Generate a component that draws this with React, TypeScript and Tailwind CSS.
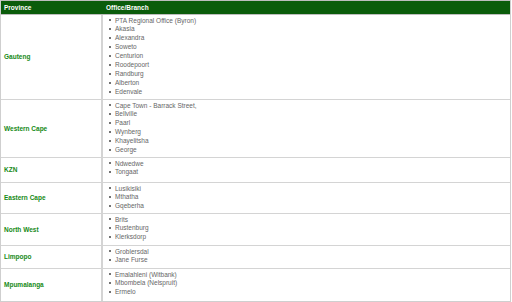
import React from "react";

type Row = { province: string; h: string; items: string[] };

const rows: Row[] = [
  {
    province: "Gauteng",
    h: "h-[84px]",
    items: [
      "PTA Regional Office (Byron)",
      "Akasia",
      "Alexandra",
      "Soweto",
      "Centurion",
      "Roodepoort",
      "Randburg",
      "Alberton",
      "Edenvale",
    ],
  },
  {
    province: "Western Cape",
    h: "h-[58px]",
    items: ["Cape Town - Barrack Street,", "Bellville", "Paarl", "Wynberg", "Khayelitsha", "George"],
  },
  { province: "KZN", h: "h-[25px]", items: ["Ndwedwe", "Tongaat"] },
  { province: "Eastern Cape", h: "h-[31px]", items: ["Lusikisiki", "Mthatha", "Gqeberha"] },
  { province: "North West", h: "h-[32px]", items: ["Brits", "Rustenburg", "Klerksdorp"] },
  { province: "Limpopo", h: "h-[23px]", items: ["Groblersdal", "Jane Furse"] },
  {
    province: "Mpumalanga",
    h: "h-[33px]",
    items: ["Emalahleni (Witbank)", "Mbombela (Nelspruit)", "Ermelo"],
  },
];

export default function App() {
  return (
    <div className="w-[512px] h-[302px] bg-white font-['Liberation_Sans',Arial,sans-serif] text-[6.5px]">
      <div className="w-[511px] border-l border-r border-b border-[#cfcfcf]">
        <div className="flex h-[15px] border-t border-b border-[#bdbdbd] bg-[#0b5c0b] text-white font-bold">
          <div className="w-[102px] flex items-center pl-[3px]">Province</div>
          <div className="flex-1 flex items-center pl-[3px]">Office/Branch</div>
        </div>
        {rows.map((r, i) => (
          <div key={r.province} className={`flex ${r.h} ${i > 0 ? "border-t border-[#d4d4d4]" : ""}`}>
            <div className="w-[102px] flex items-center pl-[3px] font-bold text-[#168a16] border-r-2 border-[#d4d4d4]">
              {r.province}
            </div>
            <div className="flex-1 pt-[1px]">
              {r.items.map((it) => (
                <div key={it} className="flex items-center h-[8.9px] text-[#666]">
                  <span className="ml-[6px] w-[2px] h-[2px] rounded-full bg-[#444]" />
                  <span className="ml-[4px]">{it}</span>
                </div>
              ))}
            </div>
          </div>
        ))}
      </div>
    </div>
  );
}
